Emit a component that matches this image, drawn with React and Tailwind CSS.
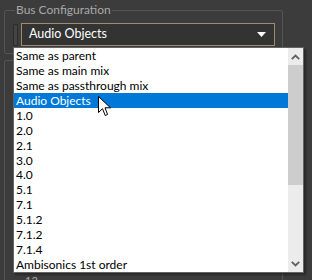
const items = [
  "Same as parent",
  "Same as main mix",
  "Same as passthrough mix",
  "Audio Objects",
  "1.0",
  "2.0",
  "2.1",
  "3.0",
  "4.0",
  "5.1",
  "7.1",
  "5.1.2",
  "7.1.2",
  "7.1.4",
  "Ambisonics 1st order",
];

const font = { fontFamily: 'Lato, "Noto Sans", sans-serif' };

export default function App() {
  return (
    <div className="relative w-[312px] h-[280px] overflow-hidden bg-[#3c3c3c]" style={font}>
      {/* group box */}
      <div className="relative ml-[4px] mt-[10px] w-[279px] h-[44px] border border-[#555555] rounded-[2px]">
        <span className="absolute -top-[9px] left-[10px] px-[1px] bg-[#3c3c3c] text-[12px] leading-[16px] text-[#a8a8a8]">
          Bus Configuration
        </span>
        <div className="flex items-center gap-[2px] mt-[12px] ml-[8px]">
          <div className="w-[5px] h-[22px] border border-[#2c2c2c] bg-[#444444] rounded-[1px]" />
          <div className="flex items-center justify-between w-[254px] h-[23px] ml-[1px] pl-[7px] pr-[8px] border border-[#a08a6c] bg-[#333333]">
            <span className="text-[12.5px] text-white leading-none">Audio Objects</span>
            <svg width="9" height="5" viewBox="0 0 9 5">
              <path d="M0 0h9L4.5 5z" fill="#ffffff" />
            </svg>
          </div>
        </div>
      </div>

      {/* lower group box (mostly hidden) */}
      <div className="ml-[4px] mt-[6px] w-[279px] h-[240px] border border-[#555555] rounded-[2px]">
        <div className="mt-[212px] ml-[16px] text-[11px] text-[#a8a8a8]">-12</div>
      </div>

      {/* dropdown list */}
      <div className="absolute left-[13px] top-[47px] w-[291px] h-[226px] flex bg-white border border-[#646464] shadow-[2px_2px_2px_rgba(0,0,0,0.35)]">
        <div className="flex-1 flex flex-col">
          {items.map((it) => (
            <div
              key={it}
              className={`h-[15px] pl-[2px] pt-[1px] flex items-center text-[12px] leading-none whitespace-nowrap ${
                it === "Audio Objects" ? "bg-[#0078d7] text-white" : "text-black"
              }`}
            >
              {it}
            </div>
          ))}
        </div>
        <div className="w-[15px] flex flex-col bg-[#ececec]">
          <div className="h-[17px] flex items-center justify-center">
            <svg width="9" height="6" viewBox="0 0 9 6">
              <path d="M0.8 5.2L4.5 1.5L8.2 5.2" stroke="#606060" strokeWidth="1.8" fill="none" />
            </svg>
          </div>
          <div className="h-[120px] bg-[#cdcdcd]" />
          <div className="flex-1" />
          <div className="h-[17px] flex items-center justify-center">
            <svg width="9" height="6" viewBox="0 0 9 6">
              <path d="M0.8 0.8L4.5 4.5L8.2 0.8" stroke="#606060" strokeWidth="1.8" fill="none" />
            </svg>
          </div>
        </div>
      </div>

      {/* mouse cursor */}
      <svg className="absolute left-[98px] top-[96px]" width="13" height="21" viewBox="0 0 13 21">
        <path
          d="M0.5 0.5V16.5L4.5 12.7L7.2 19.5L9.6 18.5L7 11.8H12.5Z"
          fill="#ffffff"
          stroke="#000000"
          strokeWidth="1"
          strokeLinejoin="miter"
        />
      </svg>
    </div>
  );
}
